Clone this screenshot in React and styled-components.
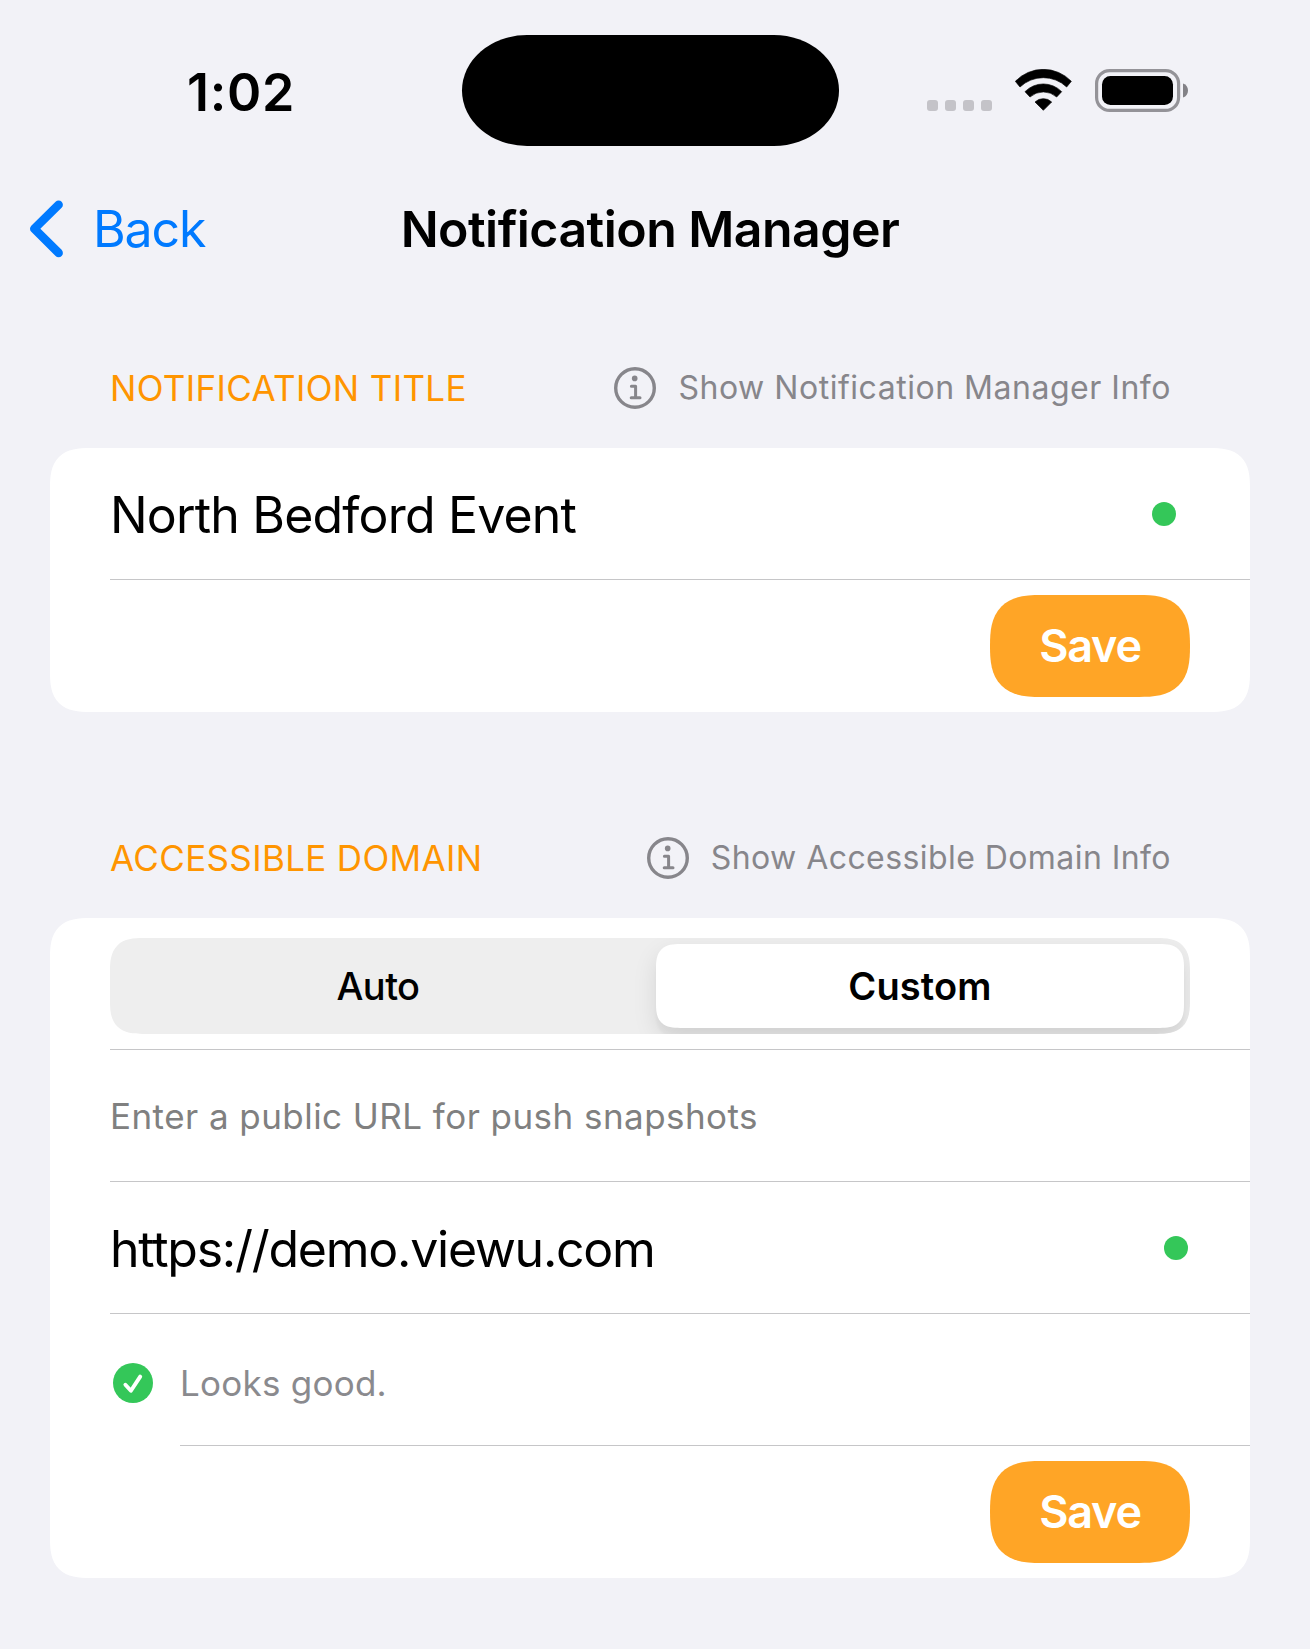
import React, { useState } from "react";
import styled, { createGlobalStyle, css } from "styled-components";

const color = {
  page: "#f2f2f7",
  card: "#ffffff",
  ink: "#000000",
  tint: "#007aff",
  accent: "#ff9500",
  button: "#ffa526",
  ok: "#34c759",
  muted: "#87868b",
  hint: "#808080",
  line: "#c6c6c8",
  track: "#eeeeee",
};

const smoothCorner = (round, smooth) => css`
  border-radius: ${round}px;
  @supports (corner-shape: superellipse(1.45)) {
    border-radius: ${smooth}px;
    corner-shape: superellipse(1.45);
  }
`;

const GlobalStyle = createGlobalStyle`
  * { box-sizing: border-box; }
  body {
    margin: 0;
    background: ${color.page};
    color: ${color.ink};
    font-family: Inter, "Liberation Sans", sans-serif;
  }
  button, input { font-family: inherit; }
`;

const Screen = styled.div`
  width: 1300px;
  min-height: 1649px;
`;

/* Status bar */

const StatusBar = styled.header`
  display: grid;
  grid-template-columns: 1fr 377px 1fr;
  align-items: center;
  height: 182px;
`;

const Clock = styled.time`
  padding: 3px 0 0 187px;
  font-size: 52px;
  font-weight: 600;
  line-height: 1;
  letter-spacing: 0.7px;
`;

const Island = styled.div`
  height: 111px;
  margin-bottom: 1px;
  border-radius: 65px / 55.5px;
  background: ${color.ink};
`;

const Indicators = styled.div`
  display: flex;
  align-items: flex-start;
  gap: 23px;
  height: 43px;
  margin-bottom: 1px;
  padding-left: 88.5px;
`;

const Signal = styled.div`
  display: flex;
  align-self: stretch;
  align-items: flex-end;
  gap: 7px;
  padding-bottom: 1px;
`;

const SignalDot = styled.span`
  width: 11px;
  height: 11px;
  border-radius: 3px;
  background: #c4c3c8;
`;

/* Navigation bar */

const NavBar = styled.nav`
  display: grid;
  grid-template-columns: 1fr auto 1fr;
  align-items: center;
  height: 94px;
`;

const BackButton = styled.button`
  display: flex;
  align-items: center;
  gap: 29px;
  padding: 0 0 0 29px;
  border: 0;
  background: none;
  color: ${color.tint};
  font-size: 50px;
  line-height: 58px;
  letter-spacing: -1.15px;
`;

const Title = styled.h1`
  margin: 0;
  font-size: 50px;
  font-weight: 600;
  line-height: 58px;
  letter-spacing: -0.54px;
`;

/* Sections */

const Content = styled.main`
  display: flex;
  flex-direction: column;
  gap: 106px;
  padding: 72px 50px 0;
`;

const SectionHeader = styled.div`
  display: flex;
  align-items: center;
  justify-content: space-between;
  height: 80px;
  margin-bottom: 20px;
  padding: 0 79px 0 60px;
`;

const SectionTitle = styled.h2`
  margin: 0;
  color: ${color.accent};
  font-size: 35px;
  font-weight: 400;
  line-height: 42px;
  letter-spacing: 0.35px;
`;

const InfoLink = styled.button`
  display: flex;
  align-items: center;
  gap: 22px;
  padding: 0;
  border: 0;
  background: none;
  color: ${color.muted};
  font-size: 32px;
  line-height: 42px;
  letter-spacing: ${(p) => p.$tracking}px;
`;

const Card = styled.div`
  overflow: hidden;
  background: ${color.card};
  ${smoothCorner(30, 40)}
`;

const Row = styled.div`
  display: flex;
  height: 132px;
  padding-left: 60px;
`;

const RowIcon = styled.div`
  display: flex;
  flex: 0 0 70px;
  align-items: center;
  padding: 6px 0 0 3px;
`;

const RowBody = styled.div`
  display: flex;
  flex: 1;
  align-items: center;
  justify-content: ${(p) => (p.$end ? "flex-end" : "space-between")};
  padding-right: ${(p) => p.$inset || 60}px;
  border-bottom: ${(p) => (p.$end ? "0" : `1px solid ${color.line}`)};
`;

const Field = styled.span`
  padding-top: 3px;
  font-size: 50px;
  line-height: 60px;
  letter-spacing: ${(p) => p.$tracking}px;
`;

const StatusDot = styled.span`
  width: 24px;
  height: 24px;
  border-radius: 50%;
  background: ${color.ok};
`;

const Note = styled.span`
  padding-top: ${(p) => p.$drop}px;
  color: ${(p) => p.$color};
  font-size: 35px;
  line-height: 42px;
  letter-spacing: ${(p) => p.$tracking}px;
`;

const SaveButton = styled.button`
  width: 200px;
  height: 102px;
  padding: 0;
  border: 0;
  background: ${color.button};
  color: #ffffff;
  font-size: 45px;
  font-weight: 600;
  line-height: 54px;
  letter-spacing: -1.2px;
  ${smoothCorner(38, 51)}
`;

const Segmented = styled.div`
  display: grid;
  grid-template-columns: 524px 528px;
  gap: 16px;
  width: 1080px;
  height: 96px;
  margin-top: 5px;
  padding: 6px;
  overflow: hidden;
  background: ${color.track};
  ${smoothCorner(25, 33)}
`;

const Segment = styled.button`
  padding: 0;
  border: 0;
  background: ${(p) => (p.$active ? "#ffffff" : "transparent")};
  color: ${color.ink};
  font-size: 38px;
  font-weight: ${(p) => (p.$active ? 600 : 500)};
  letter-spacing: ${(p) => (p.$active ? 0.14 : -0.6)}px;
  box-shadow: ${(p) =>
    p.$active ? "0 9px 24px rgba(0, 0, 0, 0.1), 0 9px 3px rgba(0, 0, 0, 0.03)" : "none"};
  ${smoothCorner(19, 24)}
`;

/* Icons */

const WifiIcon = () => (
  <svg width="57" height="42" viewBox="45 42 171 126" fill="#000" stroke="#000" strokeWidth="2" strokeLinejoin="round">
    <path d="M46 79A116 116 0 0 1 214 79L200 96A101.5 101.5 0 0 0 60 96Z" />
    <path d="M75 110A77 77 0 0 1 185 110L170 126A60 60 0 0 0 90 126Z" />
    <path d="M105 141A36 36 0 0 1 155 141L130 166Z" />
  </svg>
);

const BatteryIcon = () => (
  <svg width="93" height="43" viewBox="0 0 93 43">
    <rect x="1.6" y="1.6" width="82" height="39.8" rx="13" fill="none" stroke="#949398" strokeWidth="3.2" />
    <rect x="7" y="7" width="71" height="29" rx="8.5" fill="#000" />
    <path d="M88 14.5C91.4 15.6 93 18.2 93 21.5S91.4 27.4 88 28.5Z" fill="#838287" />
  </svg>
);

const ChevronIcon = () => (
  <svg width="35" height="58" viewBox="0 0 35 58" fill="none" stroke="currentColor" strokeWidth="8.6" strokeLinecap="round" strokeLinejoin="round">
    <path d="M29.6 4.7L5.3 28.8L29.6 52.9" />
  </svg>
);

const InfoIcon = () => (
  <svg width="42" height="42" viewBox="0 0 42 42" fill="none" stroke="currentColor" strokeLinecap="round" strokeLinejoin="round">
    <circle cx="21" cy="21" r="19.3" strokeWidth="3.4" />
    <circle cx="20.7" cy="11.4" r="2.8" fill="currentColor" stroke="none" />
    <path d="M17.4 19.2H21.6V30.8M17.2 30.8H26" strokeWidth="3" />
  </svg>
);

const CheckIcon = () => (
  <svg width="40" height="40" viewBox="0 0 40 40" fill="none">
    <circle cx="20" cy="20" r="20" fill={color.ok} />
    <path d="M12.4 21.8L17.9 27.8L27.2 13.6" stroke="#fff" strokeWidth="3.9" strokeLinecap="round" strokeLinejoin="round" />
  </svg>
);

const Header = ({ title, info, tracking }) => (
  <SectionHeader>
    <SectionTitle>{title}</SectionTitle>
    <InfoLink $tracking={tracking}>
      <InfoIcon />
      {info}
    </InfoLink>
  </SectionHeader>
);

const SaveRow = () => (
  <Row>
    <RowBody $end>
      <SaveButton>Save</SaveButton>
    </RowBody>
  </Row>
);

export default function App() {
  const [mode, setMode] = useState("Custom");

  return (
    <>
      <GlobalStyle />
      <Screen>
        <StatusBar>
          <Clock>1:02</Clock>
          <Island />
          <Indicators>
            <Signal>
              <SignalDot />
              <SignalDot />
              <SignalDot />
              <SignalDot />
            </Signal>
            <WifiIcon />
            <BatteryIcon />
          </Indicators>
        </StatusBar>

        <NavBar>
          <BackButton>
            <ChevronIcon />
            Back
          </BackButton>
          <Title>Notification Manager</Title>
        </NavBar>

        <Content>
          <section>
            <Header title="NOTIFICATION TITLE" info="Show Notification Manager Info" tracking={0.52} />
            <Card>
              <Row>
                <RowBody $inset={74}>
                  <Field $tracking={-0.82}>North Bedford Event</Field>
                  <StatusDot />
                </RowBody>
              </Row>
              <SaveRow />
            </Card>
          </section>

          <section>
            <Header title="ACCESSIBLE DOMAIN" info="Show Accessible Domain Info" tracking={0.43} />
            <Card>
              <Row>
                <RowBody>
                  <Segmented>
                    {["Auto", "Custom"].map((name) => (
                      <Segment key={name} $active={mode === name} onClick={() => setMode(name)}>
                        {name}
                      </Segment>
                    ))}
                  </Segmented>
                </RowBody>
              </Row>
              <Row>
                <RowBody>
                  <Note $drop={1} $color={color.hint} $tracking={0.45}>
                    Enter a public URL for push snapshots
                  </Note>
                </RowBody>
              </Row>
              <Row>
                <RowBody $inset={62}>
                  <Field $tracking={-1.25}>https://demo.viewu.com</Field>
                  <StatusDot />
                </RowBody>
              </Row>
              <Row>
                <RowIcon>
                  <CheckIcon />
                </RowIcon>
                <RowBody>
                  <Note $drop={7} $color="#8a8a8e" $tracking={0.24}>
                    Looks good.
                  </Note>
                </RowBody>
              </Row>
              <SaveRow />
            </Card>
          </section>
        </Content>
      </Screen>
    </>
  );
}
